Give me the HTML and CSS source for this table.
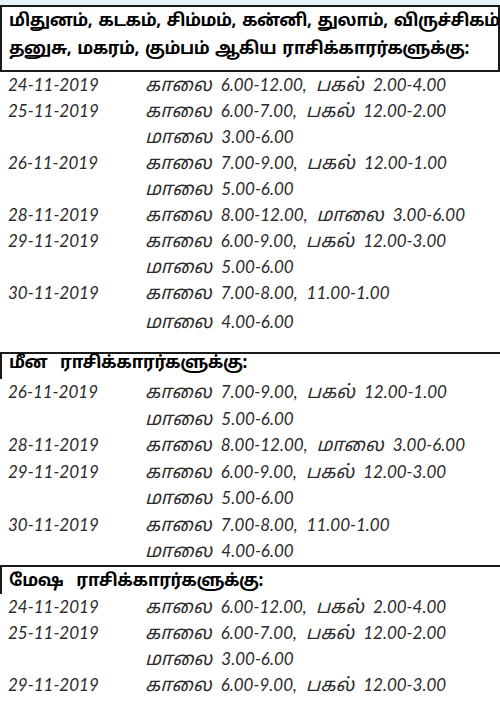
FILE: index.html
```html
<!DOCTYPE html>
<html lang="ta">
<head>
<meta charset="utf-8">
<title>ராசிக்காரர்களுக்கு</title>
<link rel="stylesheet" href="styles.css">
</head>
<body>
<div class="sheet">
  <div class="top-strip"></div>

  <section class="group group-first">
    <h2 class="group-title title-boxed">மிதுனம், கடகம், சிம்மம், கன்னி, துலாம், விருச்சிகம்<br>தனுசு, மகரம், கும்பம் ஆகிய ராசிக்காரர்களுக்கு:</h2>
    <div class="rows">
      <div class="date">24-11-2019</div>
      <div class="times"><div><span class="ta">காலை</span> 6.00-12.00, <span class="ta">பகல்</span> 2.00-4.00</div></div>
      <div class="date">25-11-2019</div>
      <div class="times"><div><span class="ta">காலை</span> 6.00-7.00, <span class="ta">பகல்</span> 12.00-2.00</div><div><span class="ta">மாலை</span> 3.00-6.00</div></div>
      <div class="date">26-11-2019</div>
      <div class="times"><div><span class="ta">காலை</span> 7.00-9.00, <span class="ta">பகல்</span> 12.00-1.00</div><div><span class="ta">மாலை</span> 5.00-6.00</div></div>
      <div class="date">28-11-2019</div>
      <div class="times"><div><span class="ta">காலை</span> 8.00-12.00, <span class="ta">மாலை</span> 3.00-6.00</div></div>
      <div class="date">29-11-2019</div>
      <div class="times"><div><span class="ta">காலை</span> 6.00-9.00, <span class="ta">பகல்</span> 12.00-3.00</div><div><span class="ta">மாலை</span> 5.00-6.00</div></div>
      <div class="date">30-11-2019</div>
      <div class="times"><div><span class="ta">காலை</span> 7.00-8.00, 11.00-1.00</div><div class="gap-line"><span class="ta">மாலை</span> 4.00-6.00</div></div>
    </div>
  </section>

  <section class="group group-mina">
    <h2 class="group-title title-side">மீன ராசிக்காரர்களுக்கு:</h2>
    <div class="rows">
      <div class="date">26-11-2019</div>
      <div class="times"><div><span class="ta">காலை</span> 7.00-9.00, <span class="ta">பகல்</span> 12.00-1.00</div><div><span class="ta">மாலை</span> 5.00-6.00</div></div>
      <div class="date">28-11-2019</div>
      <div class="times"><div><span class="ta">காலை</span> 8.00-12.00, <span class="ta">மாலை</span> 3.00-6.00</div></div>
      <div class="date">29-11-2019</div>
      <div class="times"><div><span class="ta">காலை</span> 6.00-9.00, <span class="ta">பகல்</span> 12.00-3.00</div><div><span class="ta">மாலை</span> 5.00-6.00</div></div>
      <div class="date">30-11-2019</div>
      <div class="times"><div><span class="ta">காலை</span> 7.00-8.00, 11.00-1.00</div><div><span class="ta">மாலை</span> 4.00-6.00</div></div>
    </div>
  </section>

  <section class="group group-mesha">
    <h2 class="group-title title-side">மேஷ ராசிக்காரர்களுக்கு:</h2>
    <div class="rows">
      <div class="date">24-11-2019</div>
      <div class="times"><div><span class="ta">காலை</span> 6.00-12.00, <span class="ta">பகல்</span> 2.00-4.00</div></div>
      <div class="date">25-11-2019</div>
      <div class="times"><div><span class="ta">காலை</span> 6.00-7.00, <span class="ta">பகல்</span> 12.00-2.00</div><div><span class="ta">மாலை</span> 3.00-6.00</div></div>
      <div class="date">29-11-2019</div>
      <div class="times"><div><span class="ta">காலை</span> 6.00-9.00, <span class="ta">பகல்</span> 12.00-3.00</div></div>
    </div>
  </section>
</div>
</body>
</html>
```

FILE: styles.css
```css
html, body {
  margin: 0;
  padding: 0;
  background: #ffffff;
}

.sheet {
  width: 500px;
  height: 702px;
  overflow: hidden;
  font-family: "Noto Sans Tamil", "Lohit Tamil", "Noto Sans", sans-serif;
  color: #111;
}

.top-strip {
  height: 5px;
  background: #e7f2f9;
}

.group {
  border-top: 2px solid #1a1a1a;
}

.group-title {
  margin: 0;
  font-weight: bold;
  font-size: 17px;
  letter-spacing: -0.45px;
  word-spacing: 2px;
  color: #000;
  white-space: nowrap;
  padding-left: 7px;
}

.title-boxed {
  line-height: 28px;
  padding-top: 1px;
  padding-bottom: 6px;
  border-left: 2px solid #1a1a1a;
  border-right: 2px solid #1a1a1a;
  border-bottom: 2px solid #1a1a1a;
}

.title-side {
  line-height: 22px;
  word-spacing: 9px;
  border-left: 2px solid #1a1a1a;
}

.group-mina .title-side {
  line-height: 20px;
  padding-bottom: 5px;
}

.group-mesha .title-side {
  padding-top: 4px;
  padding-bottom: 1px;
}

.rows {
  display: grid;
  grid-template-columns: 137px 1fr;
  font-family: "Lato", "Noto Sans Tamil", "Lohit Tamil", sans-serif;
  font-style: italic;
  font-size: 17px;
  line-height: 26.5px;
  color: #2a2a2a;
  padding-left: 8px;
}

.date,
.times {
  white-space: nowrap;
}

.times {
  word-spacing: 5px;
}

.ta {
  font-family: "Noto Sans Tamil", "Lohit Tamil", sans-serif;
  font-size: 18.5px;
  line-height: 16px;
  word-spacing: 0;
}

.group-first .rows {
  line-height: 26px;
  padding-bottom: 17px;
}

.gap-line {
  margin-top: 3px;
}

.group-mesha .rows {
  line-height: 26px;
}
```
